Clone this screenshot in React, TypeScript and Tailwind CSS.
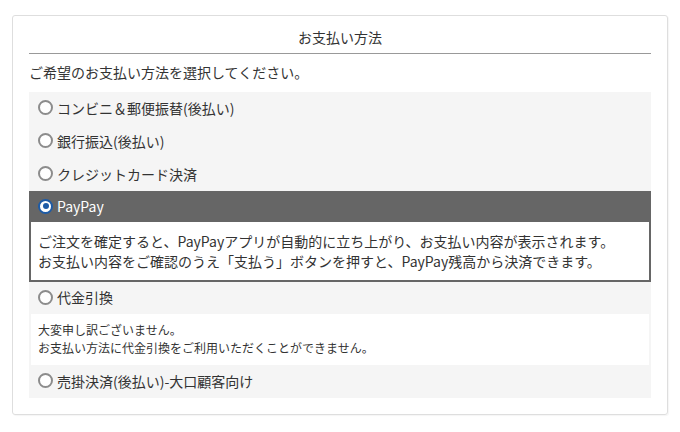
import React from "react";

const font = { fontFamily: '"Noto Sans CJK JP", "Noto Sans", sans-serif' };

function Radio({ checked }: { checked?: boolean }) {
  if (checked) {
    return (
      <span className="flex h-[15px] w-[15px] shrink-0 items-center justify-center rounded-full border-[2.5px] border-[#1d5ba6] bg-white">
        <span className="h-[6px] w-[6px] rounded-full bg-[#1d5ba6]" />
      </span>
    );
  }
  return <span className="h-[15px] w-[15px] shrink-0 rounded-full border-2 border-[#8c8c8c] bg-white" />;
}

function Row({ label }: { label: string }) {
  return (
    <div className="flex h-[33px] items-center gap-[4px] pb-[2px] pl-[9px] text-[14px] leading-[20px] text-[#333]">
      <Radio />
      <span>{label}</span>
    </div>
  );
}

export default function App() {
  return (
    <div className="h-[432px] w-[680px] bg-white px-[12px] pt-[15px]" style={font}>
      <div className="w-[656px] rounded-[3px] border border-[#dedede] px-[16px] pb-[16px] shadow-[1px_1px_1px_rgba(0,0,0,0.04)]">
        <div className="border-b border-[#999] pt-[11px] pb-[6px] text-center text-[14px] leading-[20px] text-[#333]">
          お支払い方法
        </div>
        <div className="mt-[8px] mb-[10px] text-[14px] leading-[20px] text-[#333]">ご希望のお支払い方法を選択してください。</div>
        <div className="bg-[#f5f5f5]">
          <Row label="コンビニ＆郵便振替(後払い)" />
          <Row label="銀行振込(後払い)" />
          <Row label="クレジットカード決済" />
          <div className="flex h-[31px] items-center gap-[4px] bg-[#666] pb-[1px] pl-[9px] text-[14px] leading-[20px] text-white">
            <Radio checked />
            <span>PayPay</span>
          </div>
          <div className="border-x-2 border-b-2 border-[#666] bg-white pt-[9px] pb-[9px] pl-[7px] text-[14px] leading-[20px] text-[#333]">
            <div>ご注文を確定すると、PayPayアプリが自動的に立ち上がり、お支払い内容が表示されます。</div>
            <div>お支払い内容をご確認のうえ「支払う」ボタンを押すと、PayPay残高から決済できます。</div>
          </div>
          <div className="flex h-[32px] items-center gap-[4px] pb-[2px] pl-[9px] text-[14px] leading-[20px] text-[#333]">
            <Radio />
            <span>代金引換</span>
          </div>
          <div className="mx-[2px] bg-white pt-[7px] pb-[8px] pl-[7px] text-[12px] leading-[18px] text-[#333]">
            <div>大変申し訳ございません。</div>
            <div>お支払い方法に代金引換をご利用いただくことができません。</div>
          </div>
          <Row label="売掛決済(後払い)-大口顧客向け" />
        </div>
      </div>
    </div>
  );
}
